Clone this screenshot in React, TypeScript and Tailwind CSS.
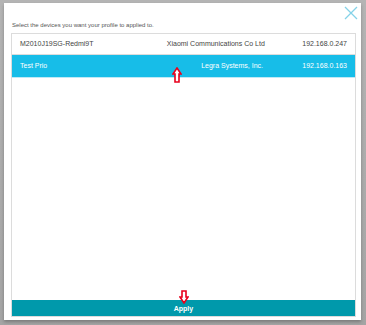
import React from 'react';

interface Device {
  name: string;
  vendor: string;
  ip: string;
}

const devices: Device[] = [
  { name: 'M2010J19SG-Redmi9T', vendor: 'Xiaomi Communications Co Ltd', ip: '192.168.0.247' },
  { name: 'Test Prio', vendor: 'Legra Systems, Inc.', ip: '192.168.0.163' }
];

const UpArrow = ({ className }: { className: string }) => (
  <svg className={className} viewBox="0 0 10 16" width="10" height="16">
    <path d="M5 1 L9 7 L7 7 L7 15 L3 15 L3 7 L1 7 Z" fill="white" stroke="#e8001c" strokeWidth="1.6" strokeLinejoin="miter" />
  </svg>
);

const DownArrow = ({ className }: { className: string }) => (
  <svg className={className} viewBox="0 0 10 14" width="10" height="14">
    <path d="M3 1 L7 1 L7 7 L9 7 L5 13 L1 7 L3 7 Z" fill="white" stroke="#e8001c" strokeWidth="1.6" strokeLinejoin="miter" />
  </svg>
);

export default function App() {
  const selected = 1;

  return (
    <div className="w-[366px] h-[325px] bg-gradient-to-b from-[#b4b4b4] to-[#a4a4a4] pt-[3px] pl-[4px] pr-[5px] pb-[5px] font-['Liberation_Sans',Arial,sans-serif]">
      <div className="relative h-full bg-white flex flex-col pl-[7px] pr-[5px] pb-[3px] shadow-[0_2px_3px_rgba(0,0,0,0.25)]">
        <div className="h-[30px] flex items-end pb-[5px] pl-[1px]">
          <p className="text-[6px] leading-none text-[#555] whitespace-nowrap">Select the devices you want your profile to applied to.</p>
        </div>
        <button className="absolute right-[3px] top-[3px] w-[14px] h-[14px]">
          <svg viewBox="0 0 14 14" width="14" height="14">
            <path d="M1 1 L13 13 M13 1 L1 13" stroke="#84d2e8" strokeWidth="1.3" />
          </svg>
        </button>

        <div className="flex-1 flex flex-col border border-[#dcdcdc]">
          <div className="flex-1">
            {devices.map((d, i) => (
              <div
                key={d.ip}
                className={
                  i === selected
                    ? 'h-[23px] flex items-center px-[8px] bg-[#17bde8] text-white border-b border-[#bfe9f6] text-[7px] whitespace-nowrap'
                    : 'h-[21px] flex items-center px-[8px] text-[#444] border-b border-[#dcdcdc] text-[7px] whitespace-nowrap'
                }
              >
                <span className="w-[150px]">{d.name}</span>
                <span className="flex-1 text-right">{d.vendor}</span>
                <span className="w-[84px] text-right">{d.ip}</span>
              </div>
            ))}
          </div>
          <button className="h-[16px] bg-[#0099ab] text-white text-[7px] font-bold leading-none flex items-center justify-center">
            Apply
          </button>
        </div>

        <UpArrow className="absolute left-[168px] top-[64px]" />
        <DownArrow className="absolute left-[175px] top-[287px]" />
      </div>
    </div>
  );
}
